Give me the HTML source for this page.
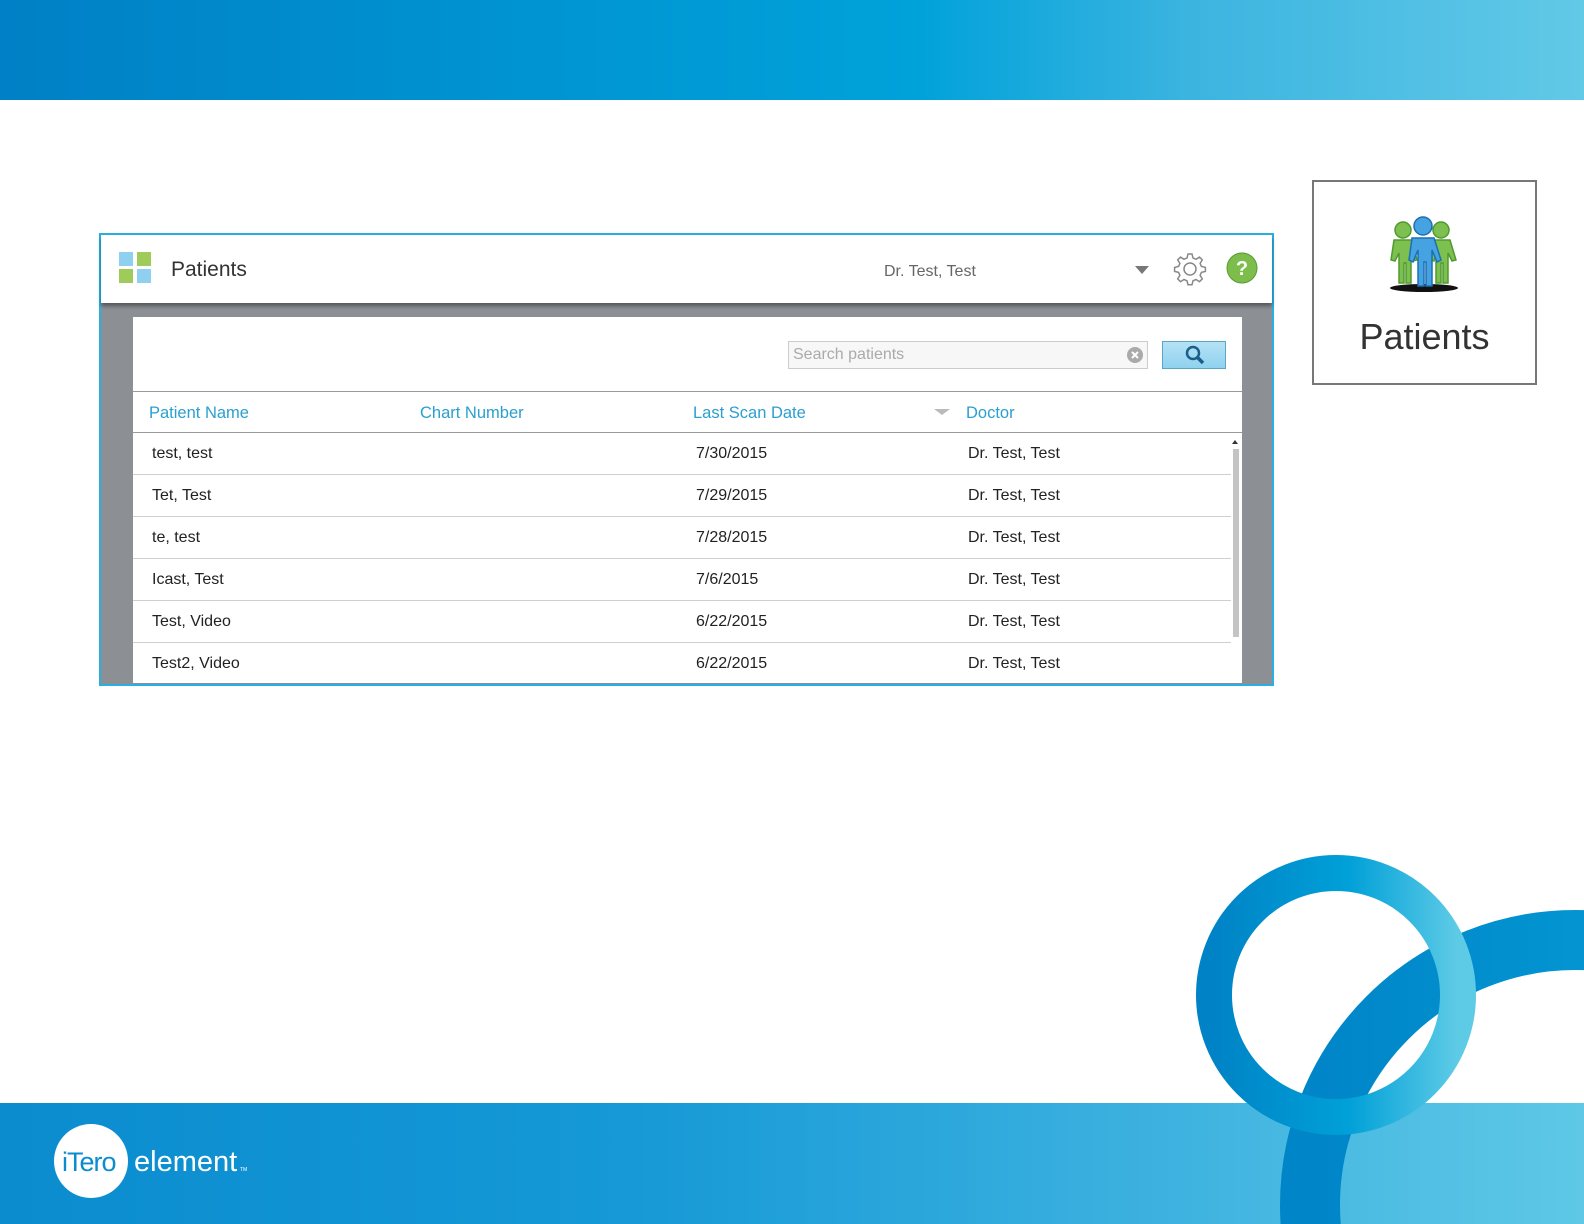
<!DOCTYPE html>
<html style="overflow:hidden;width:1584px;height:1224px"><head><style>
html,body{margin:0;overflow:hidden}
body{width:1584px;height:1224px;position:relative;background:#fff;font-family:"Liberation Sans",sans-serif}
.a{position:absolute}
.row{position:absolute;left:133px;width:1098px;height:42px;border-bottom:1px solid #cfcfcf;font-size:16px;color:#222;box-sizing:border-box}
.row span{position:absolute;top:12px}
.hd{position:absolute;top:404px;font-size:16.5px;color:#2a9fd0}
</style></head><body>
<div class="a" style="left:0;top:0;width:1584px;height:100px;background:linear-gradient(90deg,#0080c6 0%,#0098d4 40%,#00a2da 58%,#3bb4e0 75%,#62c9e7 100%)"></div>
<div class="a" style="left:0;top:1103px;width:1584px;height:121px;background:linear-gradient(90deg,#0a8ccf 0%,#1699d6 40%,#3fb3e0 75%,#5ec8e6 100%)"></div>
<svg class="a" style="left:0;top:0" width="1584" height="1224">
<defs>
<linearGradient id="g1" x1="0" x2="1"><stop offset="0" stop-color="#0083c6"/><stop offset=".55" stop-color="#00a0d8"/><stop offset="1" stop-color="#5ecbe6"/></linearGradient>
<linearGradient id="g2" x1="0" x2="1"><stop offset="0" stop-color="#0085c8"/><stop offset="1" stop-color="#06a3da"/></linearGradient>
</defs>
<circle cx="1575" cy="1205" r="265" fill="none" stroke="url(#g2)" stroke-width="60"/>
<circle cx="1336" cy="995" r="122" fill="none" stroke="url(#g1)" stroke-width="36"/>
<circle cx="91" cy="1161" r="37" fill="#fff"/>
<text x="62" y="1171" font-family="Liberation Sans" font-size="27" fill="#0a8ccf" letter-spacing="-1">iTero</text>
<text x="134" y="1171" font-family="Liberation Sans" font-size="29" fill="#fff">element</text>
<text x="240" y="1171" font-family="Liberation Sans" font-size="5" fill="#fff">TM</text>
</svg>

<div class="a" style="left:99px;top:233px;width:1171px;height:449px;border:2px solid #27b1e3;background:#8c9094"></div>
<div class="a" style="left:101px;top:235px;width:1171px;height:68px;background:#fff;box-shadow:0 3px 4px rgba(0,0,0,.4)"></div>
<div class="a" style="left:119px;top:252px;width:14px;height:14px;background:#8fd0f0"></div>
<div class="a" style="left:137px;top:252px;width:14px;height:14px;background:#9fcb5a"></div>
<div class="a" style="left:119px;top:269px;width:14px;height:14px;background:#9fcb5a"></div>
<div class="a" style="left:137px;top:269px;width:14px;height:14px;background:#8fd0f0"></div>
<div class="a" style="left:171px;top:258px;font-size:21px;color:#333">Patients</div>
<div class="a" style="left:884px;top:263px;font-size:16px;color:#666">Dr. Test, Test</div>
<div class="a" style="left:1135px;top:266px;width:0;height:0;border-left:7px solid transparent;border-right:7px solid transparent;border-top:8px solid #777"></div>
<svg class="a" style="left:1173px;top:252px" width="34" height="34" viewBox="0 0 34 34"><g fill="none" stroke="#888" stroke-width="1.5"><path d="M15 2h4l1 4 3 1.3 3.5-2.2 2.8 2.8-2.2 3.5 1.3 3 4 1v4l-4 1-1.3 3 2.2 3.5-2.8 2.8-3.5-2.2-3 1.3-1 4h-4l-1-4-3-1.3-3.5 2.2-2.8-2.8 2.2-3.5-1.3-3-4-1v-4l4-1 1.3-3-2.2-3.5 2.8-2.8 3.5 2.2 3-1.3z"/><circle cx="17" cy="17" r="6"/></g></svg>
<svg class="a" style="left:1226px;top:252px" width="32" height="32"><circle cx="16" cy="16" r="15" fill="#7cbd4c" stroke="#5a9a33"/><text x="16" y="23" text-anchor="middle" font-size="20" font-weight="bold" fill="#fff" font-family="Liberation Sans">?</text></svg>

<div class="a" style="left:133px;top:317px;width:1109px;height:366px;background:#fff"></div>
<div class="a" style="left:788px;top:341px;width:360px;height:28px;border:1px solid #ccc;background:#f7f7f7;box-sizing:border-box"></div>
<div class="a" style="left:793px;top:346px;font-size:16px;color:#aaa">Search patients</div>
<svg class="a" style="left:1126px;top:346px" width="18" height="18"><circle cx="9" cy="9" r="8" fill="#aaa"/><path d="M6 6l6 6M12 6l-6 6" stroke="#fff" stroke-width="2"/></svg>
<div class="a" style="left:1162px;top:341px;width:64px;height:28px;border:1px solid #5aa6c8;background:linear-gradient(#b5e2f5,#8fd2ef);box-sizing:border-box"></div>
<svg class="a" style="left:1184px;top:344px" width="22" height="22"><circle cx="9" cy="9" r="6" fill="none" stroke="#1a5f8a" stroke-width="2.5"/><path d="M13 13l6 6" stroke="#1a5f8a" stroke-width="3.5"/></svg>
<div class="a" style="left:133px;top:391px;width:1109px;height:1px;background:#999"></div>
<div class="hd" style="left:149px">Patient Name</div>
<div class="hd" style="left:420px">Chart Number</div>
<div class="hd" style="left:693px">Last Scan Date</div>
<div class="a" style="left:934px;top:409px;width:0;height:0;border-left:8px solid transparent;border-right:8px solid transparent;border-top:6px solid #bbb"></div>
<div class="hd" style="left:966px">Doctor</div>
<div class="a" style="left:133px;top:432px;width:1109px;height:1px;background:#999"></div>
<div class="row" style="top:433px"><span style="left:19px">test, test</span><span style="left:563px">7/30/2015</span><span style="left:835px">Dr. Test, Test</span></div>
<div class="row" style="top:475px"><span style="left:19px">Tet, Test</span><span style="left:563px">7/29/2015</span><span style="left:835px">Dr. Test, Test</span></div>
<div class="row" style="top:517px"><span style="left:19px">te, test</span><span style="left:563px">7/28/2015</span><span style="left:835px">Dr. Test, Test</span></div>
<div class="row" style="top:559px"><span style="left:19px">Icast, Test</span><span style="left:563px">7/6/2015</span><span style="left:835px">Dr. Test, Test</span></div>
<div class="row" style="top:601px"><span style="left:19px">Test, Video</span><span style="left:563px">6/22/2015</span><span style="left:835px">Dr. Test, Test</span></div>
<div class="row" style="top:643px;height:40px;border:none"><span style="left:19px">Test2, Video</span><span style="left:563px">6/22/2015</span><span style="left:835px">Dr. Test, Test</span></div>
<div class="a" style="left:1233px;top:449px;width:6px;height:188px;background:#c4c4c4"></div>
<div class="a" style="left:1232px;top:440px;width:0;height:0;border-left:3px solid transparent;border-right:3px solid transparent;border-bottom:4px solid #333"></div>

<div class="a" style="left:1312px;top:180px;width:225px;height:205px;border:2px solid #777;box-sizing:border-box"></div>
<svg class="a" style="left:1380px;top:205px" width="90" height="95">
<ellipse cx="44" cy="83" rx="34" ry="4" fill="#111"/>
<g fill="#7dc04f" stroke="#4f9a2e" stroke-width="1.5">
<circle cx="23" cy="25" r="8"/><path d="M14 35h18l5 20-4 1-2-8v30h-5v-20h-2v20h-5v-30l-4 8-4-1z"/>
<circle cx="61" cy="25" r="8"/><path d="M52 35h18l6 20-4 1-4-8v30h-5v-20h-2v20h-5v-30l-2 8-4-1z"/>
</g>
<g fill="#45a3e2" stroke="#1d6fb4" stroke-width="1.5">
<circle cx="43" cy="21" r="9"/><path d="M32 33h22l7 22-4 2-5-12v36h-6v-24h-2v24h-6v-36l-5 12-4-2z"/>
</g>
</svg>
<div class="a" style="left:1312px;top:316px;width:225px;text-align:center;font-size:36px;color:#333">Patients</div>
</body></html>
